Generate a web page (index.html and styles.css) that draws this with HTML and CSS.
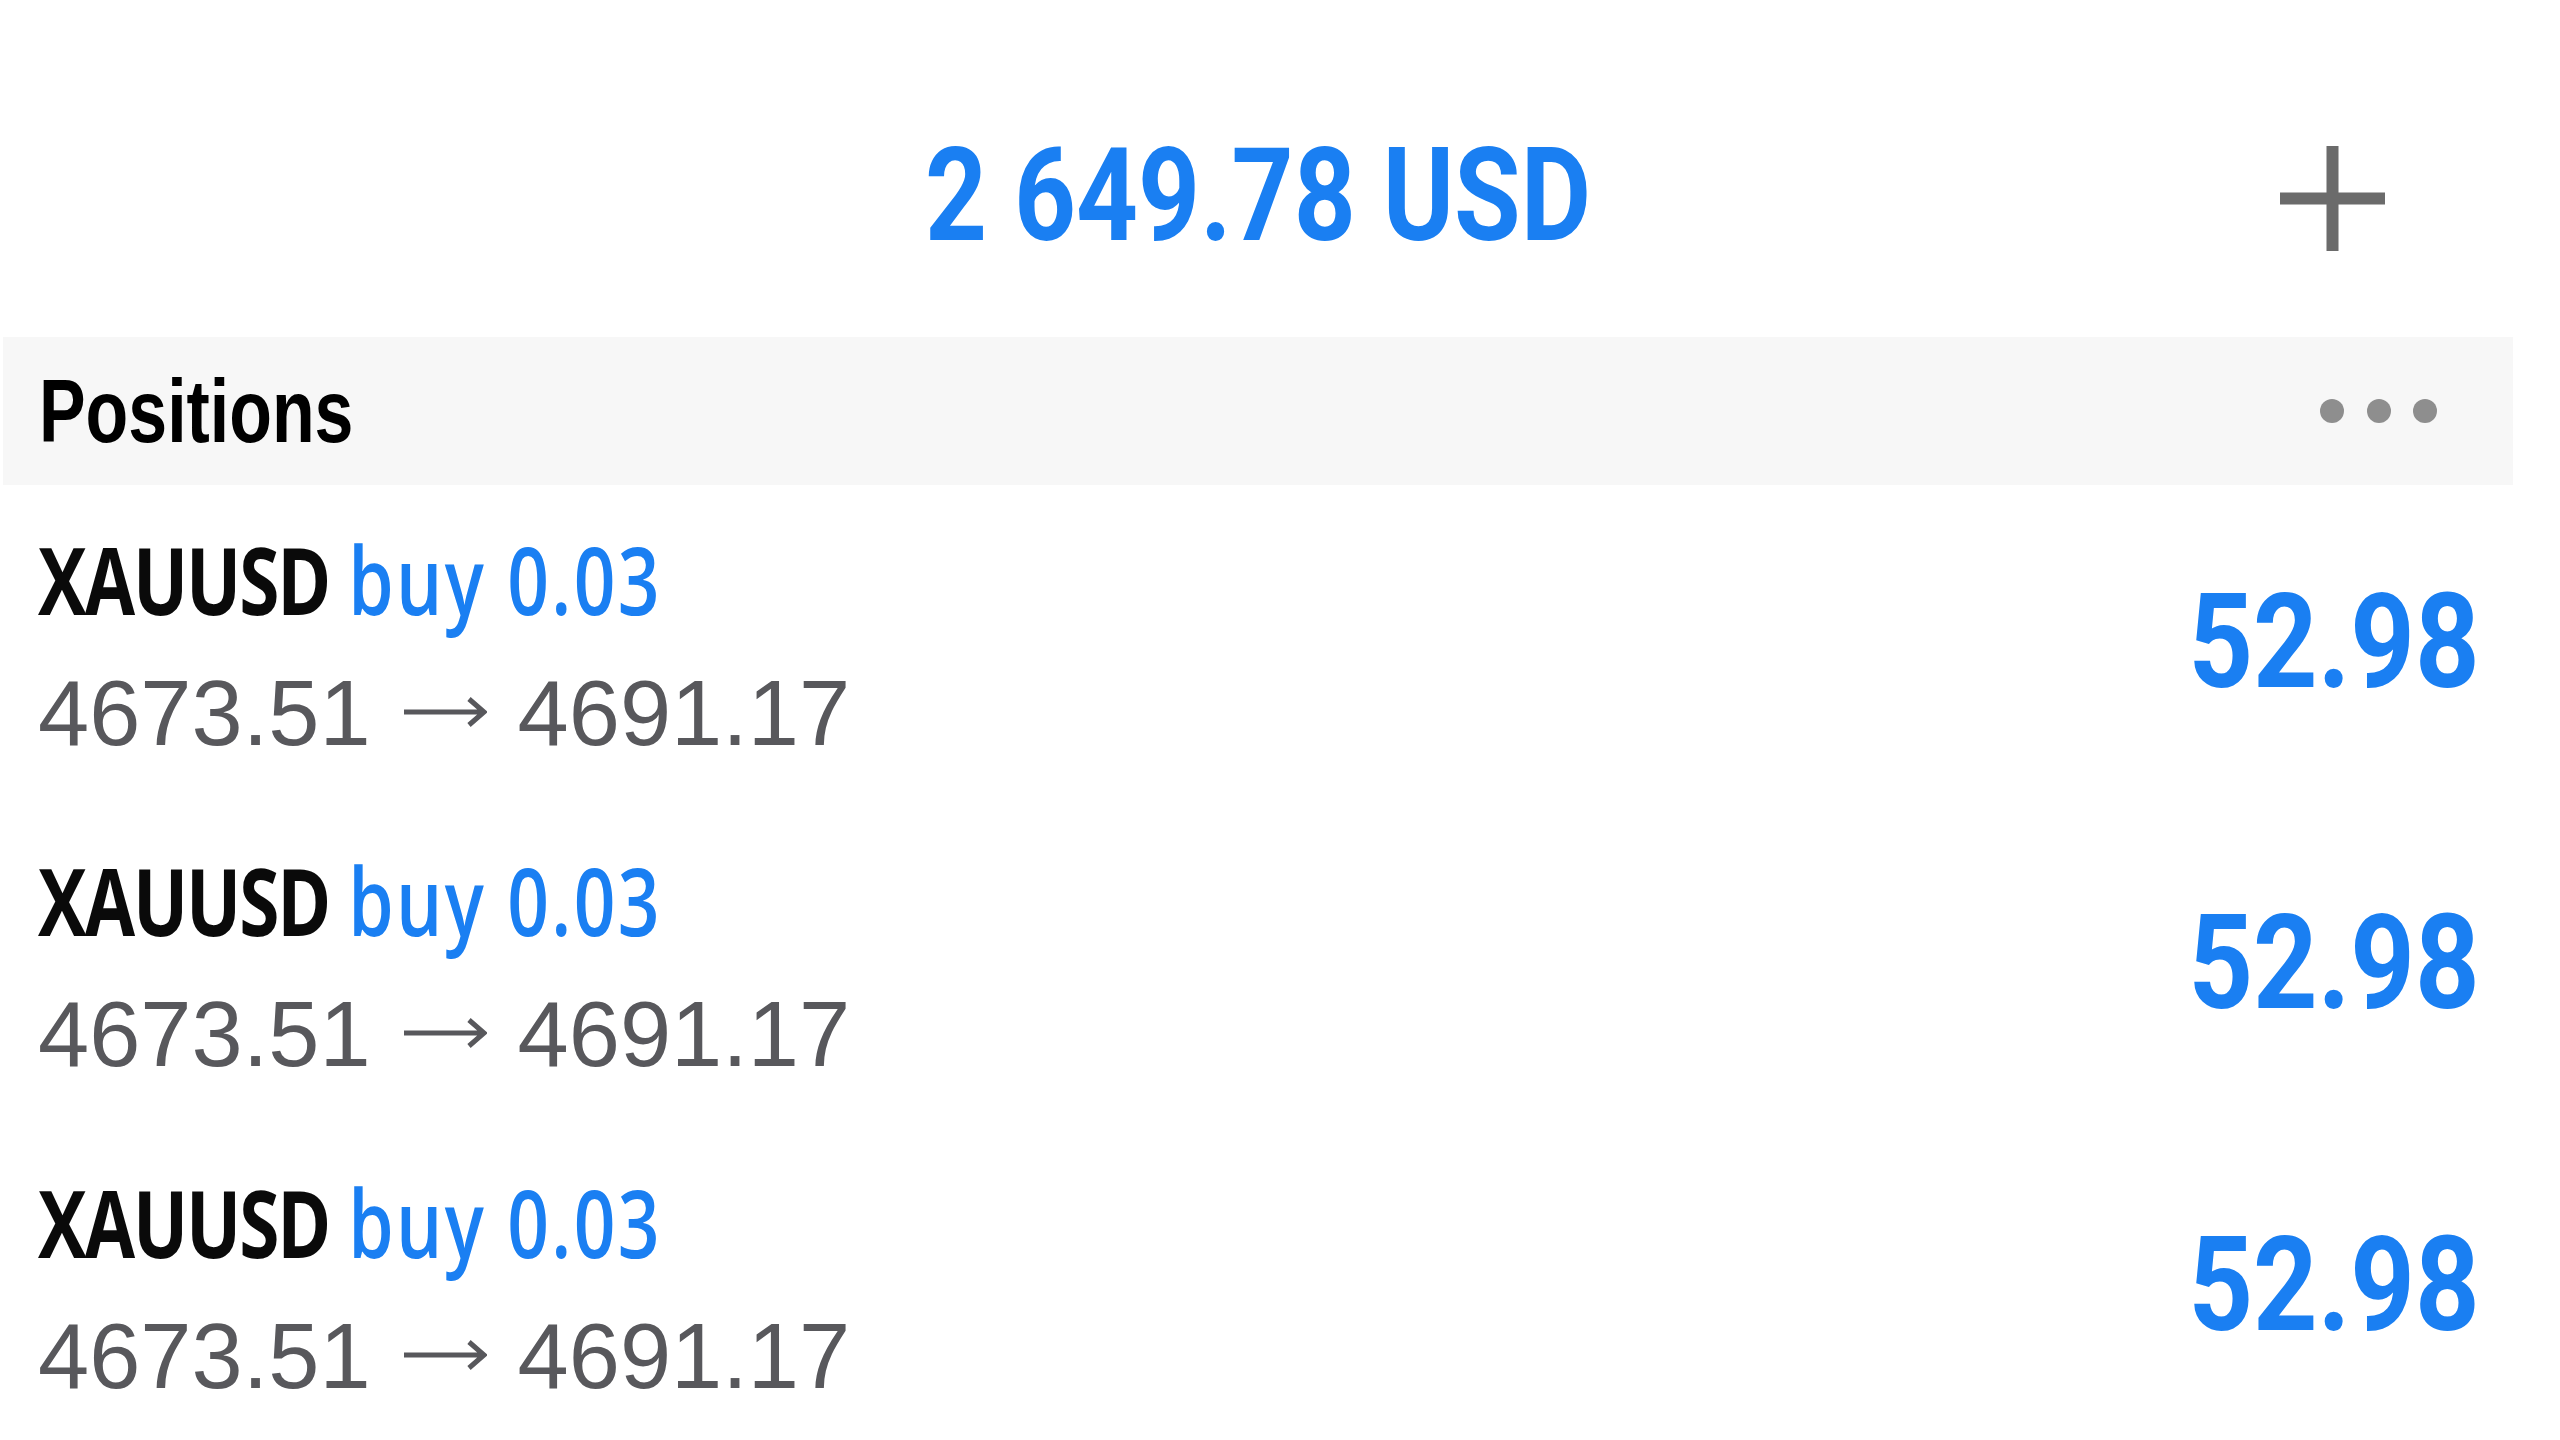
FILE: index.html
```html
<!DOCTYPE html>
<html lang="en">
<head>
<meta charset="utf-8">
<title>Positions</title>
<link rel="stylesheet" href="styles.css">
</head>
<body>
<div class="app">
  <header class="header">
    <div class="header-side"></div>
    <div class="title">2 649.78 USD</div>
    <button class="add" aria-label="Add">
      <svg viewBox="0 0 105 105" width="105" height="105"><path d="M52.5 0V105M0 52.5H105" stroke="#6b6b6b" stroke-width="12" fill="none"/></svg>
    </button>
  </header>
  <div class="band">
    <div class="band-title">Positions</div>
    <div class="more"><span class="dot"></span><span class="dot"></span><span class="dot"></span></div>
  </div>
  <div class="list">
    <div class="row">
      <div class="pos-left">
        <div class="pos-main"><span class="sym">XAUUSD</span> <span class="side">buy 0.03</span></div>
        <div class="pos-prices">4673.51<svg class="arrow" viewBox="0 0 83 34" width="83" height="34" aria-label="→"><path d="M0 17H80M65 4L80 17L65 30" stroke="#58585c" stroke-width="5" fill="none"/></svg>4691.17</div>
      </div>
      <div class="pnl">52.98</div>
    </div>
    <div class="row">
      <div class="pos-left">
        <div class="pos-main"><span class="sym">XAUUSD</span> <span class="side">buy 0.03</span></div>
        <div class="pos-prices">4673.51<svg class="arrow" viewBox="0 0 83 34" width="83" height="34" aria-label="→"><path d="M0 17H80M65 4L80 17L65 30" stroke="#58585c" stroke-width="5" fill="none"/></svg>4691.17</div>
      </div>
      <div class="pnl">52.98</div>
    </div>
    <div class="row">
      <div class="pos-left">
        <div class="pos-main"><span class="sym">XAUUSD</span> <span class="side">buy 0.03</span></div>
        <div class="pos-prices">4673.51<svg class="arrow" viewBox="0 0 83 34" width="83" height="34" aria-label="→"><path d="M0 17H80M65 4L80 17L65 30" stroke="#58585c" stroke-width="5" fill="none"/></svg>4691.17</div>
      </div>
      <div class="pnl">52.98</div>
    </div>
  </div>
</div>
</body>
</html>
```
FILE: styles.css
```css
html, body {
  margin: 0;
  padding: 0;
  background: #ffffff;
  overflow: hidden;
}

.app {
  width: 2510px;
  margin-left: 3px;
}

.header {
  height: 337px;
  box-sizing: border-box;
  padding-top: 136px;
  display: grid;
  grid-template-columns: 1fr auto 1fr;
  align-items: start;
}

.title {
  font-family: Roboto, "Liberation Sans", sans-serif;
  font-weight: 700;
  font-size: 129px;
  line-height: 120px;
  color: #1a7ff2;
  white-space: nowrap;
  transform: scaleX(0.839);
  transform-origin: center center;
}

.add {
  justify-self: end;
  margin: 10px 128px 0 0;
  padding: 0;
  border: 0;
  background: none;
  width: 105px;
  height: 105px;
  display: block;
}

.add svg {
  display: block;
}

.band {
  height: 148px;
  box-sizing: border-box;
  background: #f7f7f7;
  display: flex;
  align-items: center;
  justify-content: space-between;
  padding: 0 76px 0 36px;
}

.band-title {
  font-family: "Liberation Sans", Arial, sans-serif;
  font-weight: 700;
  font-size: 89px;
  line-height: 100px;
  color: #000000;
  white-space: nowrap;
  transform: scaleX(0.785);
  transform-origin: left center;
}

.more {
  display: flex;
  gap: 22.5px;
}

.dot {
  width: 24px;
  height: 24px;
  border-radius: 50%;
  background: #8e8e8e;
}

.row {
  height: 321.5px;
  box-sizing: border-box;
  display: flex;
  justify-content: space-between;
  align-items: flex-start;
  padding: 0 33px 0 35px;
}

.pos-left {
  display: flex;
  flex-direction: column;
}

.pos-main {
  margin-top: 33.5px;
  height: 120px;
  line-height: 120px;
  font-family: "Open Sans", "Liberation Sans", sans-serif;
  font-size: 94px;
  white-space: nowrap;
  transform: scaleX(0.776);
  transform-origin: left center;
}

.sym {
  font-weight: 700;
  color: #0a0a0a;
  letter-spacing: -2.6px;
}

.side {
  font-weight: 600;
  color: #1a7ff2;
  letter-spacing: 3px;
}

.pos-prices {
  margin-top: 14px;
  height: 120px;
  line-height: 120px;
  font-family: "Liberation Sans", Arial, sans-serif;
  font-size: 92px;
  color: #58585c;
  white-space: nowrap;
}

.arrow {
  vertical-align: 16px;
  margin: 0 31px 0 33px;
}

.pnl {
  margin-top: 96.5px;
  line-height: 120px;
  font-family: Roboto, "Liberation Sans", sans-serif;
  font-weight: 700;
  font-size: 131px;
  color: #1a7ff2;
  white-space: nowrap;
  transform: scaleX(0.86);
  transform-origin: right center;
}
```
